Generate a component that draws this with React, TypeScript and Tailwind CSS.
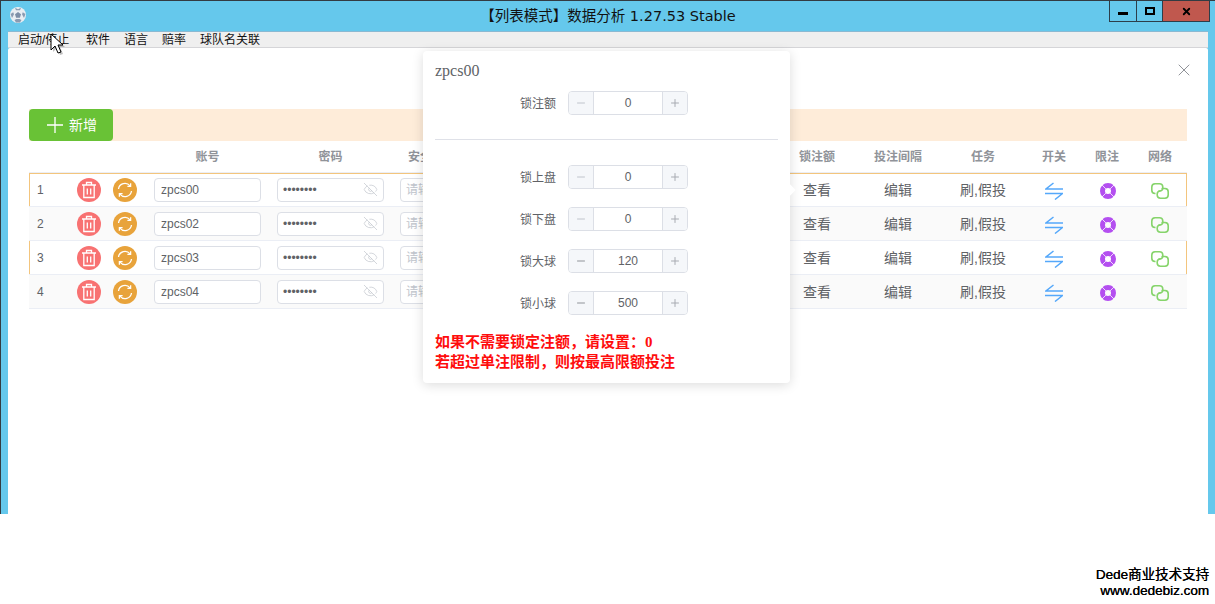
import { EyeOff, X, Minus, Plus } from "lucide-react";

const accounts = [
  { no: 1, name: "zpcs00" },
  { no: 2, name: "zpcs02" },
  { no: 3, name: "zpcs03" },
  { no: 4, name: "zpcs04" },
];

const menus = ["启动/停止", "软件", "语言", "赔率", "球队名关联"];

const limits = [
  { label: "锁上盘", value: 0 },
  { label: "锁下盘", value: 0 },
  { label: "锁大球", value: 120 },
  { label: "锁小球", value: 500 },
];

const sans = "font-['Liberation_Sans','Noto_Sans_CJK_SC',sans-serif]";
const serif = "font-['Liberation_Serif','Noto_Sans_CJK_SC',serif]";

function SoccerIcon() {
  return (
    <svg width="16" height="16" viewBox="0 0 16 16">
      <circle cx="8" cy="8" r="8" fill="#e9eef3" />
      <path d="M8 5l3 2.2-1.1 3.5H6.100L5 7.200z" fill="#7d8fa8" />
      <path d="M5 .8L8 2.200 11 .8 10 3.200H6zM.6 7l2.600-1.800.8 2L2 11zM15.400 7l-2.600-1.800-.8 2L14 11zM4.500 13l2-1h3l2 1-1.500 2.600h-4z" fill="#8a9bb2" />
    </svg>
  );
}

function TrashIcon() {
  return (
    <svg width="16" height="18" viewBox="0 0 16 18" fill="none" stroke="#fff" strokeWidth="1.300">
      <path d="M1 4h14M5.500 4V1.500h5V4M2.800 4v12.500h10.400V4M6.300 7.500v6M9.700 7.500v6" />
    </svg>
  );
}

function RefreshIcon() {
  return (
    <svg width="16" height="16" viewBox="0 0 16 16" fill="none" stroke="#fff" strokeWidth="1.300">
      <path d="M1.500 7A6.500 6.500 0 0 1 13 3.800M14.500 9A6.500 6.500 0 0 1 3 12.200" />
      <path d="M13.600 1.200v3.200h-3.200M2.400 14.800v-3.200h3.200" />
    </svg>
  );
}

function SwitchIcon() {
  return (
    <svg width="18" height="18" viewBox="0 0 18 18" fill="none" stroke="#55a8fa" strokeWidth="1.500">
      <path d="M8.500 1L1 7h17M0 11.500h17.500L10 17.500" />
    </svg>
  );
}

function LimitIcon() {
  return (
    <svg width="16" height="16" viewBox="0 0 16 16">
      <circle cx="8" cy="8" r="5.500" fill="none" stroke="#b44ff0" strokeWidth="5" />
      <path d="M2 2l3.900 3.900M14 2l-3.900 3.900M2 14l3.900-3.900M14 14l-3.900-3.900" stroke="#fff" strokeWidth="0.800" />
    </svg>
  );
}

function LinkIcon() {
  return (
    <svg width="18" height="16" viewBox="0 0 18 16" fill="none" stroke="#86d46b" strokeWidth="1.600">
      <path d="M4.500 10.500H4A3.300 3.300 0 0 1 .8 7.200V4A3.300 3.300 0 0 1 4 .8h4.500A3.300 3.300 0 0 1 11.800 4v1A3.200 3.200 0 0 1 8.500 8H7.500" />
      <path d="M10.500 5.500H14A3.300 3.300 0 0 1 17.200 8.800V12A3.300 3.300 0 0 1 14 15.200H9.500A3.300 3.300 0 0 1 6.200 12V11A3.200 3.200 0 0 1 9.500 8" />
    </svg>
  );
}

function Cursor() {
  return (
    <svg className="absolute left-[50px] top-[33px]" width="16" height="24" viewBox="0 0 16 24">
      <path d="M3 3v16l4-4 3 7 3-1-3-7h5z" fill="#000" opacity="0.25" />
      <path d="M1 1v16l4-4 3 7 3-1-3-7h5z" fill="#fff" stroke="#000" strokeWidth="1" />
    </svg>
  );
}

function NumberBox({ value }: { value: number }) {
  return (
    <div className="flex h-6 w-[120px] overflow-hidden rounded-[4px] border border-[#dcdfe6] text-xs text-[#606266]">
      <div className={`flex w-[25px] items-center justify-center border-r border-[#dcdfe6] bg-[#f5f7fa] ${value === 0 ? "text-[#c0c4cc]" : "text-[#909399]"}`}>
        <Minus size={12} />
      </div>
      <div className="flex flex-1 items-center justify-center">{value}</div>
      <div className="flex w-[25px] items-center justify-center border-l border-[#dcdfe6] bg-[#f5f7fa] text-[#a8abb2]">
        <Plus size={12} />
      </div>
    </div>
  );
}

function LockRow({ label, value }: { label: string; value: number }) {
  return (
    <div className="flex items-center gap-3">
      <div className="w-[121px] pt-px text-right text-xs text-[#606266]">{label}</div>
      <NumberBox value={value} />
    </div>
  );
}

function Popover() {
  return (
    <div className="absolute left-[423px] top-[51px] h-[332px] w-[367px] rounded-[4px] bg-white px-3 pt-3 shadow-[0_2px_12px_rgba(0,0,0,0.14)]">
      <div className={`${serif} mb-3 h-4 text-[16px] leading-4 text-[#606266]`}>zpcs00</div>
      <LockRow label="锁注额" value={0} />
      <div className="mb-[25px] mt-6 h-px bg-[#dfe1e8]" />
      <div className="flex flex-col gap-[18px]">
        {limits.map((l) => (
          <LockRow key={l.label} label={l.label} value={l.value} />
        ))}
      </div>
      <div className={`${serif} mt-[17px] text-[15px] font-bold leading-5 text-[#ff0d0d]`}>
        <div>如果不需要锁定注额，请设置：0</div>
        <div>若超过单注限制，则按最高限额投注</div>
      </div>
      <div className="absolute right-[-4px] top-[135px] h-2 w-2 rotate-45 bg-white" />
    </div>
  );
}

function TableHeader() {
  return (
    <div className="flex h-8 items-center border-b border-[#ebeef5] text-center text-xs font-bold text-[#909399]">
      <div className="w-[42px]" />
      <div className="w-9" />
      <div className="w-9" />
      <div className="w-[126px] pl-[3px]">账号</div>
      <div className="w-[123px]">密码</div>
      <div className="w-[123px] pl-4 text-left">安全码</div>
      <div className="w-[262px]" />
      <div className="w-20">锁注额</div>
      <div className="w-[82px]">投注间隔</div>
      <div className="w-[88px]">任务</div>
      <div className="w-[54px]">开关</div>
      <div className="w-[52px]">限注</div>
      <div className="w-[54px]">网络</div>
    </div>
  );
}

function AccountRow({ no, name }: { no: number; name: string }) {
  const rowStyle =
    no === 1
      ? "bg-white shadow-[inset_1px_0_0_#f3c57d,inset_-1px_0_0_#f3c57d,inset_0_1px_0_#f3c57d]"
      : no === 3
      ? "bg-white shadow-[inset_1px_0_0_#f3c57d,inset_-1px_0_0_#f3c57d]"
      : "bg-[#fafafa]";

  return (
    <div className={`flex h-[34px] items-center border-b border-[#ebeef5] text-center text-xs text-[#606266] ${rowStyle}`}>
      <div className="w-[42px] pl-2 text-left">{no}</div>
      <div className="flex w-9 justify-center">
        <div className="flex h-6 w-6 items-center justify-center rounded-full bg-[#f87272]">
          <TrashIcon />
        </div>
      </div>
      <div className="flex w-9 justify-center">
        <div className="flex h-6 w-6 items-center justify-center rounded-full bg-[#e8a33b]">
          <RefreshIcon />
        </div>
      </div>
      <div className="w-[126px] pl-[11px] pr-2">
        <div className="flex h-6 items-center rounded-[4px] border border-[#dcdfe6] bg-white px-[6px]">{name}</div>
      </div>
      <div className="w-[123px] px-2">
        <div className="flex h-6 items-center justify-between rounded-[4px] border border-[#dcdfe6] bg-white px-[5px]">
          <span className="text-xs text-[#606266]">••••••••</span>
          <EyeOff size={15} strokeWidth={1.1} className="text-[#c0c4cc]" />
        </div>
      </div>
      <div className="w-[123px] px-2">
        <div className="flex h-6 items-center rounded-[4px] border border-[#dcdfe6] bg-white px-[5px] text-[#c0c4cc]">请输入安全码</div>
      </div>
      <div className="w-[262px]" />
      <div className="w-20 pt-px text-[14px]">查看</div>
      <div className="w-[82px] pt-px text-[14px]">编辑</div>
      <div className="w-[88px] pt-px text-[14px]">刷,假投</div>
      <div className="flex w-[54px] justify-center pt-[3px]">
        <SwitchIcon />
      </div>
      <div className="flex w-[52px] justify-center pl-px pt-[3px]">
        <LimitIcon />
      </div>
      <div className="flex w-[54px] justify-center pt-[3px]">
        <LinkIcon />
      </div>
    </div>
  );
}

export default function App() {
  return (
    <div className={`${sans} relative h-[604px] w-[1215px] overflow-hidden bg-white`}>
      <div className="h-[514px] border-l border-t border-[#333b42] bg-[#65c8ec] pl-[7px] pr-[7px]">
        <div className="-ml-[7px] -mr-[7px] grid h-[30px] grid-cols-[1fr_auto_1fr] items-start">
          <div className="pl-[9px] pt-[6px]">
            <SoccerIcon />
          </div>
          <div className="pt-[6px] font-['DejaVu_Sans','Noto_Sans_CJK_SC',sans-serif] text-[14.500px] leading-[18px] text-[#111]">
            【列表模式】数据分析 1.27.53 Stable
          </div>
          <div className="flex justify-end pr-[5px]">
            <div className="flex h-[21px] border-x border-b border-[#2c3e4a]">
              <div className="flex w-[27px] items-end justify-center border-r border-[#2c3e4a] pb-[6px]">
                <div className="h-[3px] w-[10px] bg-black" />
              </div>
              <div className="flex w-[26px] items-center justify-center border-r border-[#2c3e4a]">
                <div className="h-[8px] w-[10px] border-2 border-black" />
              </div>
              <div className="flex w-[46px] items-center justify-center bg-[#c0584e]">
                <X size={11} strokeWidth={4} className="text-black" />
              </div>
            </div>
          </div>
        </div>
        <div className="flex h-[17px] items-center gap-[14px] border-b border-t border-b-[#d5d5d8] border-t-[#8ab9d2] bg-[#efefef] pl-[10px] text-xs text-[#111]">
          {menus.map((m, i) => (
            <span key={m} className={i === 0 ? "w-[54px]" : ""}>
              {m}
            </span>
          ))}
        </div>
        <div className="h-[466px] rounded-t-[2px] bg-white px-[21px]">
          <div className="-mr-[7px] flex h-[61px] justify-end pt-[12px]">
            <X size={20} strokeWidth={1.2} className="text-[#909399]" />
          </div>
          <div className="flex h-8 bg-[#feecd9]">
            <div className="flex w-[84px] items-center justify-center gap-[6px] rounded-[4px] bg-[#69c236] pl-[2px] text-[14px] text-white">
              <svg width="16" height="16" viewBox="0 0 16 16" stroke="#fff" strokeWidth="1.300">
                <path d="M8 0v16M0 8h16" />
              </svg>
              新增
            </div>
          </div>
          <TableHeader />
          {accounts.map((a) => (
            <AccountRow key={a.no} no={a.no} name={a.name} />
          ))}
        </div>
      </div>
      <div className="flex flex-col items-end pr-[6px] pt-[53px] text-[13.500px] leading-4 text-black [text-shadow:0.3px_0_0_#000]">
        <div>Dede商业技术支持</div>
        <div>www.dedebiz.com</div>
      </div>
      <Popover />
      <Cursor />
    </div>
  );
}
